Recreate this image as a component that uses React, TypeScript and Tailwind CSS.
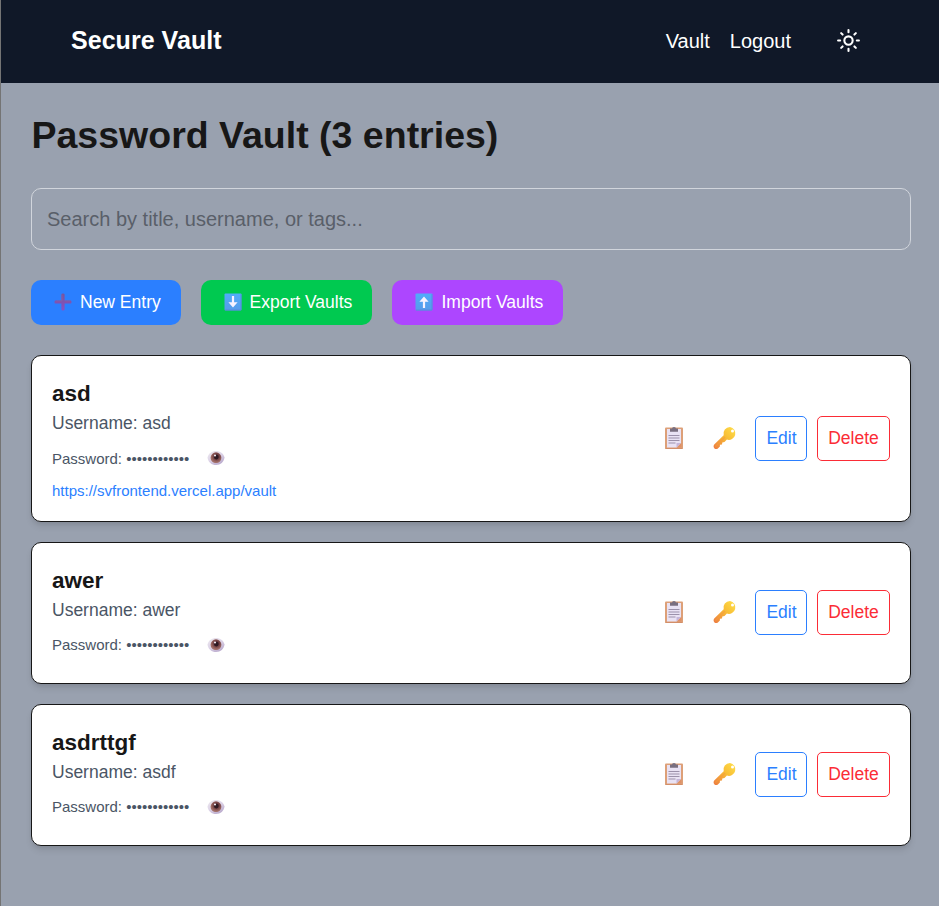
import React from "react";
import { Sun } from "lucide-react";

const entries = [
  { title: "asd", username: "asd", url: "https://svfrontend.vercel.app/vault" },
  { title: "awer", username: "awer" },
  { title: "asdrttgf", username: "asdf" },
];

function PlusIcon() {
  return (
    <svg width="18" height="18" viewBox="0 0 18 18">
      <defs>
        <linearGradient id="plus" x1="0" y1="0" x2="0" y2="1">
          <stop offset="0" stopColor="#76549c" />
          <stop offset="1" stopColor="#8950c4" />
        </linearGradient>
      </defs>
      <path d="M7.400 1.400Q7.400.5 9 .5t1.600.9V7.400h6q.9 0 .9 1.600t-.9 1.600h-6v6q0 .9-1.600.9t-1.600-.9v-6H1.400Q.5 10.600.5 9t.9-1.600h6z" fill="url(#plus)" />
      <path d="M8 1.500V8H1.500M10.500 8h6" stroke="#8a62a4" strokeWidth=".7" fill="none" />
    </svg>
  );
}

function ArrowIcon({ up }: { up?: boolean }) {
  return (
    <svg width="18" height="18" viewBox="0 0 18 18">
      <defs>
        <linearGradient id="tile" x1="0" y1="0" x2="0" y2="1">
          <stop offset="0" stopColor="#50acfa" />
          <stop offset="1" stopColor="#579bea" />
        </linearGradient>
      </defs>
      <rect x=".5" y=".5" width="17" height="17" rx="1" fill="url(#tile)" />
      <path d="M17 1v16H1" stroke="#5586da" fill="none" strokeWidth=".8" />
      <g transform={up ? "rotate(180 9 9)" : undefined}>
        <path d="M7.900 3h2.200v6.200h3.500L9 14.500 4.400 9.200h3.500z" fill="#f7f2ff" />
      </g>
    </svg>
  );
}

function EyeIcon() {
  return (
    <svg width="18" height="18" viewBox="0 0 18 18">
      <defs>
        <linearGradient id="white" x1="0" y1="0" x2=".7" y2="1">
          <stop offset="0" stopColor="#eeeaf0" />
          <stop offset=".5" stopColor="#ded5e8" />
          <stop offset="1" stopColor="#b9a9cc" />
        </linearGradient>
        <radialGradient id="iris" cx=".55" cy=".4">
          <stop offset="0" stopColor="#42202d" />
          <stop offset=".45" stopColor="#6a393f" />
          <stop offset="1" stopColor="#a06c65" />
        </radialGradient>
      </defs>
      <path d="M.5 8.700C1.500 4.200 5 2 9 2s7.500 2.200 8.500 6.500C17 13 13.500 16 9 16S1.200 13.200.5 8.700z" fill="url(#white)" />
      <circle cx="9" cy="8.700" r="5.400" fill="url(#iris)" />
      <circle cx="9.300" cy="8.100" r="2.300" fill="#2d1922" />
      <circle cx="8" cy="6.500" r="1.100" fill="#eee6ee" />
    </svg>
  );
}

function ClipboardIcon() {
  return (
    <svg width="20" height="24" viewBox="0 0 20 24">
      <rect x="1" y="1.500" width="18" height="21.500" rx="1" fill="#dda078" />
      <path d="M1.500 22.500h17" stroke="#d38e68" />
      <path d="M3 3h14v14l-4.500 4.500H3z" fill="#e9e2f4" />
      <path d="M12.500 21.500V17H17z" fill="#c5b5da" />
      <path d="M13 21.500L17.500 17v4.500z" fill="#df9167" />
      <path d="M6 2.500h2q0-1.500 2-1.500t2 1.500h2v3.300H6z" fill="#796f80" />
      <path d="M4.500 9.500h11M4.500 12h11M4.500 14.500h11M4.500 17h7" stroke="#9c91ab" strokeWidth="1" />
    </svg>
  );
}

function KeyIcon() {
  return (
    <svg width="24" height="24" viewBox="0 0 24 24">
      <defs>
        <linearGradient id="key" x1="1" y1="0" x2="0" y2="1">
          <stop offset="0" stopColor="#ffe04a" />
          <stop offset=".45" stopColor="#f8bd35" />
          <stop offset="1" stopColor="#ec7942" />
        </linearGradient>
      </defs>
      <path fillRule="evenodd" d="M17 1a6.500 6.500 0 0 0-6.300 8.200L1.200 18.600C.3 19.600.4 21.500 1.500 22.500c1 .9 2.500.7 3.400-.1l2-2v-1.600l2.100-.3.300-2.100 2.200-.3 2.400-2.500A6.500 6.500 0 1 0 17 1zm2.500 2.500a1.500 1.500 0 1 1 0 3 1.500 1.500 0 0 1 0-3z" fill="url(#key)" />
      <path d="M2.500 20.500L12 11" stroke="#f59c40" strokeWidth="1.200" opacity=".65" />
    </svg>
  );
}

export default function App() {
  return (
    <div className="h-[906px] overflow-hidden border-l border-[#747474] bg-[#99a1af] font-['Liberation_Sans',Arial,sans-serif] text-[#171717]">
      <header className="flex h-[83px] items-center bg-[#101828] pr-[78px] pl-[70px] text-white">
        <div className="pb-[2px] text-[25px] leading-[35px] font-bold tracking-[0.04px]">Secure Vault</div>
        <nav className="ml-auto flex items-center pb-[2px] text-[20px] leading-[30px]">
          <a className="mr-5">Vault</a>
          <a className="mr-[45px]">Logout</a>
          <button><Sun size={25} strokeWidth={2} /></button>
        </nav>
      </header>
      <main className="pt-[30px] pr-7 pl-[30px]">
        <h1 className="pl-[0.5px] text-[37.5px] leading-[45px] font-bold">Password Vault (3 entries)</h1>
        <input
          className="mt-[30px] block h-[62px] w-full rounded-[10px] border border-[#d1d5dc] bg-transparent px-[15px] text-[20px] placeholder:text-[#595f69]"
          placeholder="Search by title, username, or tags..."
        />
        <div className="mt-[30px] flex gap-5 text-[17.5px] leading-[25px] text-white">
          <button className="flex h-[45px] w-[150px] items-center rounded-[10px] bg-[#2b7fff] pb-[2px] pl-[23px]">
            <PlusIcon /><span className="ml-2 pt-[2px] whitespace-nowrap">New Entry</span>
          </button>
          <button className="flex h-[45px] w-[171px] items-center rounded-[10px] bg-[#00c950] pb-[2px] pl-[23px]">
            <ArrowIcon /><span className="ml-[7.5px] pt-[2px] whitespace-nowrap">Export Vaults</span>
          </button>
          <button className="flex h-[45px] w-[171px] items-center rounded-[10px] bg-[#ad46ff] pb-[2px] pl-[23px]">
            <ArrowIcon up /><span className="ml-[8.5px] pt-[2px] whitespace-nowrap">Import Vaults</span>
          </button>
        </div>
        <div className="mt-[30px] flex flex-col gap-5">
          {entries.map((e) => (
            <article key={e.title} className="flex items-center justify-between rounded-[10px] border border-[#171717] bg-white p-5 shadow-[0_5px_7.5px_-1px_rgb(0_0_0/0.1),0_2.5px_5px_-2.5px_rgb(0_0_0/0.1)]">
              <div>
                <h2 className="text-[22.5px] leading-[35px] font-bold">{e.title}</h2>
                <p className="text-[17.5px] leading-[25px] text-[#4a5565]">Username: {e.username}</p>
                <div className={`mt-[5px] flex items-center text-[15px] leading-5 text-[#4a5565] ${e.url ? "h-[35px]" : "mb-[2px] h-[33px]"}`}>
                  <span>Password: ••••••••••••</span>
                  <button className={e.url ? "ml-[17.5px] pb-[1px]" : "ml-[17.5px] pt-[1px]"}><EyeIcon /></button>
                </div>
                {e.url && <a className="mt-[5px] block text-[15px] leading-5 text-[#2b7fff]">{e.url}</a>}
              </div>
              <div className={`flex items-center text-[17.5px] leading-[25px] ${e.url ? "" : "mb-[1px]"}`}>
                <button className="mr-[29px] pb-[1px]"><ClipboardIcon /></button>
                <button className="mr-[18px] pb-[1px]"><KeyIcon /></button>
                <button className="mr-[10px] h-[45px] w-[52px] rounded-[5px] border border-[#2b7fff] pl-[1px] text-[#2b7fff]">Edit</button>
                <button className="h-[45px] w-[73px] rounded-[5px] border border-[#fb2c36] text-[#fb2c36]">Delete</button>
              </div>
            </article>
          ))}
        </div>
      </main>
    </div>
  );
}
